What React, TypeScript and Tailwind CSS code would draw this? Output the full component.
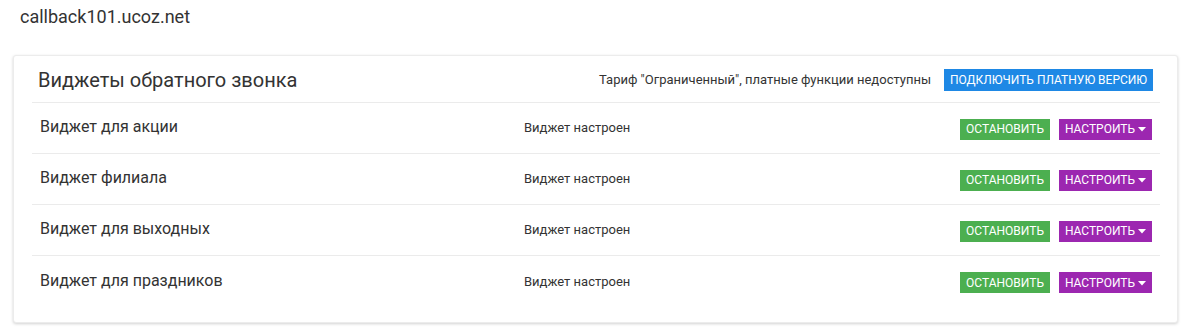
import React from 'react';

const widgets = [
  'Виджет для акции',
  'Виджет филиала',
  'Виджет для выходных',
  'Виджет для праздников',
];

/**
 * Callback widgets list for a site
 */
export default function App() {
  return (
    <div className="w-[1189px] h-[332px] bg-white text-[#333] font-['Roboto',sans-serif]">
      {/* Site name */}
      <div className="h-[55px] pl-[20px] pt-[4px] text-[18px] leading-[26px]">callback101.ucoz.net</div>

      {/* Card */}
      <div className="ml-[13px] w-[1165px] h-[268px] bg-white rounded-[3px] border border-[#ececec] shadow-[0_1px_3px_rgba(0,0,0,0.18)] pl-[18px] pr-[17px]">
        {/* Header */}
        <div className="h-[47px] flex items-center justify-between border-b border-[#ebebeb] pl-[6px] pr-[7px]">
          <div className="text-[20px] leading-none pt-[1px]">Виджеты обратного звонка</div>
          <div className="flex items-center gap-[13px] pt-[1px]">
            <span className="text-[13px]">Тариф "Ограниченный", платные функции недоступны</span>
            <button className="h-[22px] w-[209px] bg-[#1e88e5] text-white text-[12px] uppercase leading-none">
              Подключить платную версию
            </button>
          </div>
        </div>

        {/* Rows */}
        <div className="divide-y divide-[#ebebeb]">
          {widgets.map((name) => (
            <div key={name} className="h-[51px] grid grid-cols-[484px_1fr_auto] items-center pl-[8px] pr-[8px]">
              <div className="text-[16px] pb-[2px]">{name}</div>
              <div className="text-[13px]">Виджет настроен</div>
              <div className="flex items-center gap-[9px] pt-[2px]">
                <button className="h-[21px] w-[90px] bg-[#4caf50] text-white text-[12px] leading-none">
                  ОСТАНОВИТЬ
                </button>
                <button className="h-[21px] w-[93px] bg-[#9c27b0] text-white text-[12px] leading-none flex items-center justify-center gap-[3px]">
                  НАСТРОИТЬ
                  <svg width="8" height="5" viewBox="0 0 8 5" className="mt-[1px]">
                    <path d="M0 0h8L4 4.5z" fill="white" />
                  </svg>
                </button>
              </div>
            </div>
          ))}
        </div>
      </div>
    </div>
  );
}
